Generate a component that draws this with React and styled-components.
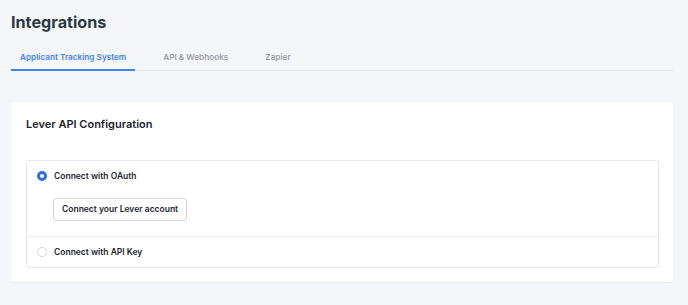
import React, { useState } from 'react'
import styled, { createGlobalStyle } from 'styled-components'

const GlobalStyle = createGlobalStyle`
  html, body {
    margin: 0;
    padding: 0;
    background: #f5f6fa;
    font-family: Inter, "Noto Sans", sans-serif;
  }
`

const Page = styled.div`
  padding: 10px 15px 20px 11px;
`

const Title = styled.h1`
  margin: 0;
  font-size: 16.2px;
  line-height: 24px;
  font-weight: 700;
  color: #2b3a44;
`

const Tabs = styled.div`
  display: flex;
  margin-top: 12px;
  border-bottom: 1px solid #e3e5ea;
`

const Tab = styled.button`
  border: none;
  background: none;
  font-family: inherit;
  font-size: 8.2px;
  font-weight: 600;
  padding: 0 9px 1px;
  height: 25px;
  margin-right: 19px;
  margin-bottom: -1px;
  cursor: pointer;
  color: ${p => (p.$active ? '#3d86ee' : '#9a9ea5')};
  border-bottom: 2px solid ${p => (p.$active ? '#3d86ee' : 'transparent')};
`

const Card = styled.div`
  margin-top: 31px;
  background: #fff;
  border-radius: 3px;
  box-shadow: 0 1px 1px rgba(0, 0, 0, 0.06);
  padding: 14px 14px 14px 15px;
`

const CardTitle = styled.h2`
  margin: 0 0 28px;
  font-size: 11px;
  line-height: 16px;
  font-weight: 600;
  color: #1e2530;
`

const Options = styled.div`
  border: 1px solid #e6e7ea;
  border-radius: 3px;
`

const Option = styled.div`
  padding: ${p => (p.$open ? '8px 10px 15px' : '8px 10px 8px')};
  & + & {
    border-top: 1px solid #ececef;
  }
`

const OptionHead = styled.label`
  display: flex;
  align-items: center;
  gap: 7px;
  height: 14px;
  cursor: pointer;
  font-size: 8.5px;
  font-weight: 600;
  color: #1e2530;
`

const Radio = styled.span`
  width: 10px;
  height: 10px;
  border-radius: 50%;
  box-sizing: border-box;
  flex: none;
  background: #fff;
  border: ${p => (p.$checked ? '3px solid #2f6de8' : '1px solid #d2d5da')};
`

const Body = styled.div`
  padding-left: 16px;
  margin-top: 13px;
`

const Button = styled.button`
  font-family: inherit;
  font-size: 8.5px;
  font-weight: 600;
  color: #1e2530;
  background: #fff;
  border: 1px solid #d6d8dc;
  border-radius: 3px;
  height: 23px;
  padding: 0 8px;
  cursor: pointer;
`

export default function App() {
  const [tab, setTab] = useState(0)
  const [mode, setMode] = useState('oauth')
  const tabs = ['Applicant Tracking System', 'API & Webhooks', 'Zapier']

  return (
    <Page>
      <GlobalStyle />
      <Title>Integrations</Title>
      <Tabs>
        {tabs.map((t, i) => (
          <Tab key={t} $active={tab === i} onClick={() => setTab(i)}>
            {t}
          </Tab>
        ))}
      </Tabs>
      <Card>
        <CardTitle>Lever API Configuration</CardTitle>
        <Options>
          <Option $open={mode === 'oauth'}>
            <OptionHead onClick={() => setMode('oauth')}>
              <Radio $checked={mode === 'oauth'} />
              Connect with OAuth
            </OptionHead>
            {mode === 'oauth' && (
              <Body>
                <Button>Connect your Lever account</Button>
              </Body>
            )}
          </Option>
          <Option $open={mode === 'key'}>
            <OptionHead onClick={() => setMode('key')}>
              <Radio $checked={mode === 'key'} />
              Connect with API Key
            </OptionHead>
          </Option>
        </Options>
      </Card>
    </Page>
  )
}
